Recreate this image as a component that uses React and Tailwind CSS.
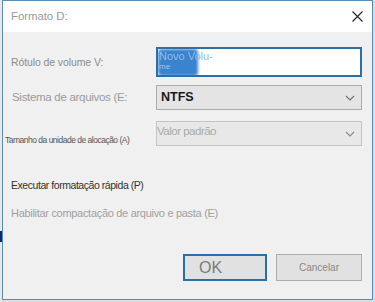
import React from "react";

const Chevron = ({ color = "#707070" }) => (
  <svg width="10" height="6" viewBox="0 0 10 6" fill="none">
    <path d="M1 1l4 4 4-4" stroke={color} strokeWidth="1.1" />
  </svg>
);

export default function App() {
  return (
    <div
      className="w-[375px] h-[302px] bg-[#d9dde2] flex overflow-hidden"
      style={{ fontFamily: "'Liberation Sans', Arial, sans-serif" }}
    >
      {/* strip left of the window */}
      <div className="w-[2px] flex flex-col">
        <div className="h-[231px] bg-[#e6e8ea]" />
        <div className="h-[11px] bg-[#0c2a6b]" />
        <div className="flex-1 bg-[#e6e8ea]" />
      </div>

      <div className="w-[371px] h-[300px] border border-[#5a8cba] bg-[#f0f0f0] flex flex-col">
        {/* Title bar */}
        <div className="h-[31px] bg-white flex items-center justify-between pl-[8px] pr-[9px]">
          <span className="text-[11.5px] text-[#9a9a9a] tracking-[-0.1px]">Formato D:</span>
          <svg width="11" height="11" viewBox="0 0 11 11">
            <path d="M0.5 0.5l10 10M10.5 0.5l-10 10" stroke="#222" strokeWidth="1.1" />
          </svg>
        </div>

        {/* Body */}
        <div className="flex-1 flex flex-col pl-[8px] pr-[10px]">
          <div className="flex items-center mt-[15px] h-[30px]">
            <span className="w-[145px] text-[10.5px] text-[#8c8c8c] tracking-[-0.1px] pt-[1px]">Rótulo de volume V:</span>
            <div className="relative flex-1 h-full bg-white border-2 border-[#2a6fa8] overflow-hidden">
              <div className="absolute left-0 top-0 w-[40px] h-[27px] bg-[#3a83cf] rounded-sm blur-[1.5px]" />
              <div className="relative pl-[1px] pt-[1px] leading-[13px] text-[11px] text-[#8fbde6]">
                <div>Novo Volu-</div>
                <div className="text-[8px] leading-[8px] text-[#9cc6ea]">me</div>
              </div>
            </div>
          </div>

          <div className="flex items-center mt-[8px] h-[25px]">
            <span className="w-[145px] text-[11.5px] text-[#9a9a9a] tracking-[-0.3px] pl-[1px]">Sistema de arquivos (E:</span>
            <div className="flex-1 h-full bg-[#e4e4e4] border border-[#acacac] flex items-center justify-between pl-[4px] pr-[6px]">
              <span className="text-[12.5px] text-[#1a1a1a] font-semibold">NTFS</span>
              <Chevron />
            </div>
          </div>

          <div className="flex items-end mt-[11px] h-[25px]">
            <span className="w-[145px] -ml-[6px] mr-[6px] text-[8.5px] leading-[10px] tracking-[-0.5px] text-[#555] pb-[1px]">
              Tamanho da unidade de alocação (A)
            </span>
            <div className="flex-1 h-full bg-[#e8e8e8] border border-[#c4c4c4] flex items-center justify-between pr-[6px]">
              <span className="text-[11.5px] text-[#a8a8a8] tracking-[-0.5px] -mt-[3px]">Valor padrão</span>
              <Chevron color="#8a8a8a" />
            </div>
          </div>

          <div className="mt-[31px] h-[16px] leading-[16px] text-[10.5px] text-[#333] tracking-[-0.45px]">
            Executar formatação rápida (P)
          </div>
          <div className="mt-[12px] h-[16px] leading-[16px] text-[11px] text-[#a0a0a0] tracking-[-0.3px]">
            Habilitar compactação de arquivo e pasta (E)
          </div>

          <div className="flex justify-end gap-[9px] mt-[33px]">
            <div className="w-[84px] h-[27px] border-2 border-[#2a6fa8] bg-[#e1e1e1] flex items-center pl-[14px]">
              <span className="text-[16px] text-[#7a7a7a]">OK</span>
            </div>
            <div className="w-[86px] h-[27px] border border-[#adadad] bg-[#e1e1e1] flex items-center justify-center">
              <span className="text-[10px] text-[#888]">Cancelar</span>
            </div>
          </div>
        </div>
      </div>
    </div>
  );
}
